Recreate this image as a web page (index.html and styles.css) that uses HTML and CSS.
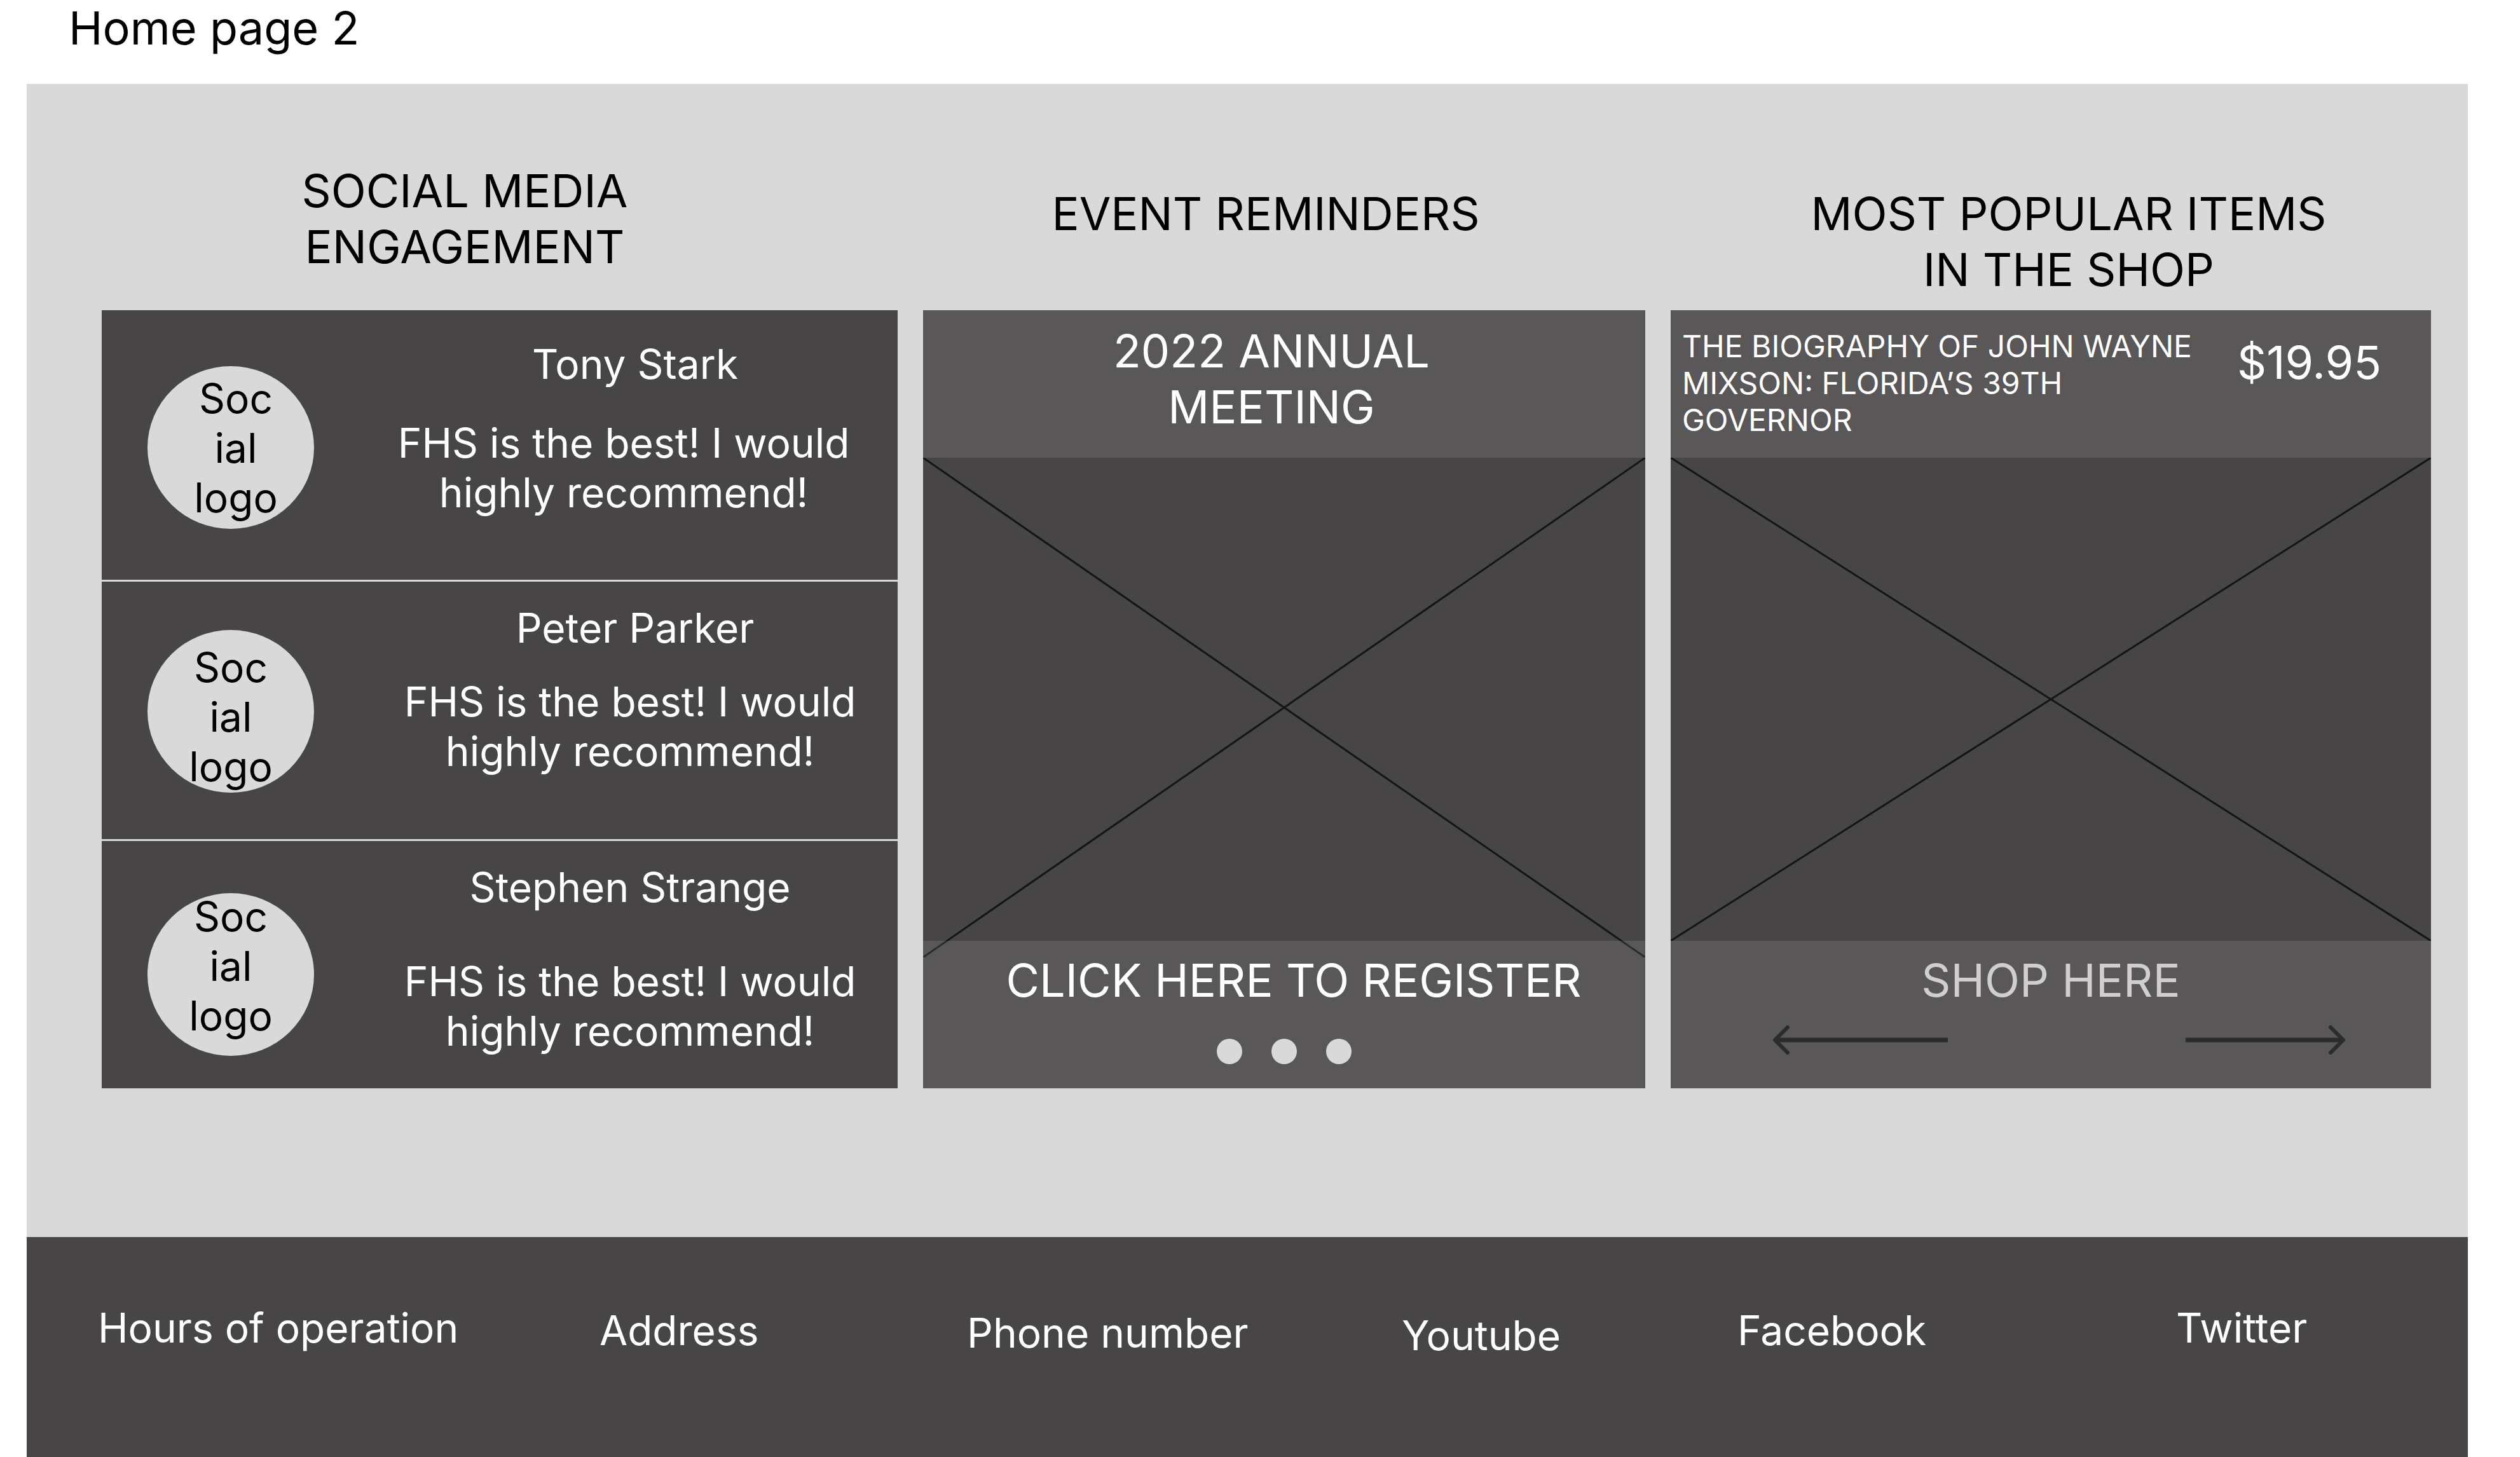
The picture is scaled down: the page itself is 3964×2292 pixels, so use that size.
FILE: index.html
```html
<!DOCTYPE html>
<html lang="en">
<head>
<meta charset="utf-8">
<title>Home page 2</title>
<link rel="stylesheet" href="styles.css">
</head>
<body>
<h1 class="page-title">Home page 2</h1>
<div class="frame">
  <main class="columns">
    <section class="column column-social">
      <h2 class="heading">SOCIAL MEDIA<br>ENGAGEMENT</h2>
      <ul class="card posts">
        <li class="post post-first">
          <div class="avatar"><span class="avatar-label">Soc<br>ial<br>logo</span></div>
          <div class="post-text">
            <h3 class="author">Tony Stark</h3>
            <p class="quote">FHS is the best! I would<br>highly recommend!</p>
          </div>
        </li>
        <li class="post post-second">
          <div class="avatar"><span class="avatar-label">Soc<br>ial<br>logo</span></div>
          <div class="post-text">
            <h3 class="author">Peter Parker</h3>
            <p class="quote">FHS is the best! I would<br>highly recommend!</p>
          </div>
        </li>
        <li class="post post-third">
          <div class="avatar"><span class="avatar-label">Soc<br>ial<br>logo</span></div>
          <div class="post-text">
            <h3 class="author">Stephen Strange</h3>
            <p class="quote">FHS is the best! I would<br>highly recommend!</p>
          </div>
        </li>
      </ul>
    </section>

    <section class="column column-events">
      <h2 class="heading">EVENT REMINDERS</h2>
      <article class="card media">
        <header class="band event-head"><h3 class="event-title">2022 ANNUAL<br>MEETING</h3></header>
        <div class="picture">
          <svg class="cross cross-tall" viewBox="0 0 100 100" preserveAspectRatio="none" aria-hidden="true">
            <path d="M0 0L100 100M100 0L0 100" vector-effect="non-scaling-stroke"/>
          </svg>
        </div>
        <footer class="band band-foot">
          <a class="action action-register" href="#register">CLICK HERE TO REGISTER</a>
          <div class="dots">
            <button class="dot" type="button" aria-label="Event 1"></button>
            <button class="dot" type="button" aria-label="Event 2"></button>
            <button class="dot" type="button" aria-label="Event 3"></button>
          </div>
        </footer>
      </article>
    </section>

    <section class="column column-shop">
      <h2 class="heading">MOST POPULAR ITEMS<br>IN THE SHOP</h2>
      <article class="card media">
        <header class="band item-head">
          <h3 class="item-title">THE BIOGRAPHY OF JOHN WAYNE MIXSON: FLORIDA’S 39TH GOVERNOR</h3>
          <p class="price">$19.95</p>
        </header>
        <div class="picture">
          <svg class="cross" viewBox="0 0 100 100" preserveAspectRatio="none" aria-hidden="true">
            <path d="M0 0L100 100M100 0L0 100" vector-effect="non-scaling-stroke"/>
          </svg>
        </div>
        <footer class="band band-foot">
          <a class="action action-shop" href="#shop">SHOP HERE</a>
          <div class="arrows">
            <button class="arrow" type="button" aria-label="Previous item">
              <svg width="276" height="48" viewBox="0 0 276 48" aria-hidden="true"><path class="shaft" d="M276 24H6"/><path class="head" d="M24 4L4 24L24 44"/></svg>
            </button>
            <button class="arrow" type="button" aria-label="Next item">
              <svg width="252" height="48" viewBox="0 0 252 48" aria-hidden="true"><path class="shaft" d="M0 24H246"/><path class="head" d="M228 4L248 24L228 44"/></svg>
            </button>
          </div>
        </footer>
      </article>
    </section>
  </main>

  <footer class="site-footer">
    <span>Hours of operation</span>
    <span class="drop-1">Address</span>
    <span class="drop-2">Phone number</span>
    <a class="drop-3" href="#youtube">Youtube</a>
    <a class="drop-1" href="#facebook">Facebook</a>
    <a href="#twitter">Twitter</a>
  </footer>
</div>
</body>
</html>
```
FILE: styles.css
```css
* {
  box-sizing: border-box;
}

body {
  display: flex;
  flex-direction: column;
  min-height: 100vh;
  margin: 0;
  background: #fff;
  color: #000;
  font-family: Inter, "Liberation Sans", sans-serif;
  font-size: 64px;
  line-height: 78px;
}

h1, h2, h3, p, ul {
  margin: 0;
  padding: 0;
  font-size: inherit;
  font-weight: 400;
}

a {
  color: inherit;
  text-decoration: none;
}

button {
  padding: 0;
  border: 0;
  background: none;
  cursor: pointer;
}

.page-title {
  padding: 0 108px 44px;
  font-size: 72px;
  line-height: 88px;
}

.frame {
  display: flex;
  flex: 1;
  flex-direction: column;
  margin: 0 82px 0 42px;
  background: #d9d9d9;
}

/* Three columns */
.columns {
  display: grid;
  grid-template-columns: 1252fr 1136fr 1196fr;
  gap: 40px;
  padding: 0 58px 234px 118px;
}

.column {
  display: grid;
  grid-template-rows: 356px 1fr;
}

.heading {
  padding-top: 160px;
  font-size: 72px;
  line-height: 88px;
  text-align: center;
}

.column-social .heading {
  padding-top: 124px;
  padding-right: 110px;
}

.column-events .heading {
  padding-right: 58px;
}

.column-shop .heading {
  padding-left: 56px;
}

.card {
  background: #474546;
  color: #fff;
}

/* Social posts */
.posts {
  display: flex;
  flex-direction: column;
  list-style: none;
}

.post {
  display: flex;
  gap: 86px;
  padding-left: 72px;
  border-bottom: 3px solid #d9d9d9;
}

.post-first {
  height: 427px;
}

.post-second {
  height: 408px;
}

.post-third {
  flex: 1;
  border-bottom: 0;
}

.avatar {
  flex: none;
  width: 262px;
  height: 256px;
  margin-top: 88px;
  border-radius: 50%;
  background: #d9d9d9;
  color: #000;
  text-align: center;
}

.avatar-label {
  display: block;
  padding-top: 12px;
}

.post-first .avatar {
  padding-left: 16px;
}

.post-second .avatar {
  margin-top: 76px;
}

.post-second .avatar-label {
  padding-top: 20px;
}

.post-third .avatar {
  margin-top: 82px;
}

.post-third .avatar-label {
  margin-top: -2px;
  padding-top: 0;
}

.post-text {
  display: flex;
  flex: 1;
  flex-direction: column;
  gap: 38px;
  padding: 34px 10px 0 0;
  text-align: center;
}

.post-first .post-text {
  gap: 46px;
  padding-top: 46px;
}

.post-third .post-text {
  gap: 70px;
}

.post-first .author,
.post-second .author {
  padding-left: 16px;
}

.post-first .quote {
  padding-right: 20px;
}

/* Event and shop cards */
.media {
  position: relative;
  display: grid;
  grid-template-rows: 232px 760px 232px;
}

.band {
  position: relative;
  z-index: 1;
  background: rgba(255, 255, 255, 0.1);
}

.picture {
  position: relative;
}

.cross {
  position: absolute;
  inset: 0;
  width: 100%;
  height: 100%;
  fill: none;
  stroke: #151515;
  stroke-width: 3px;
}

.cross-tall {
  height: calc(100% + 26px);
}

.event-head {
  padding: 20px 40px 0 0;
  font-size: 72px;
  line-height: 88px;
  text-align: center;
}

.item-head {
  display: flex;
  justify-content: space-between;
  padding: 28px 78px 0 18px;
}

.item-title {
  max-width: 820px;
  font-size: 48px;
  line-height: 58px;
}

.price {
  padding-top: 10px;
  font-size: 72px;
  line-height: 88px;
}

.band-foot {
  display: flex;
  flex-direction: column;
  padding-top: 18px;
}

.action {
  font-size: 72px;
  line-height: 88px;
  text-align: center;
}

.action-register {
  padding-left: 30px;
}

.action-shop {
  color: #d0cece;
}

.dots {
  display: flex;
  justify-content: center;
  gap: 46px;
  padding-top: 48px;
}

.dot {
  width: 40px;
  height: 40px;
  border-radius: 50%;
  background: #d9d9d9;
}

.arrows {
  display: flex;
  justify-content: space-between;
  padding: 26px 134px 0 160px;
}

.arrow svg {
  display: block;
  fill: none;
  stroke: #2b2b2b;
}

.shaft {
  stroke-width: 7px;
}

.head {
  stroke-width: 6px;
  stroke-linecap: round;
  stroke-linejoin: round;
}

/* Site footer */
.site-footer {
  display: grid;
  flex: 1;
  grid-template-columns: 789fr 578fr 684fr 528fr 690fr 459fr;
  align-items: start;
  padding: 104px 0 120px 112px;
  background: #474546;
  color: #fff;
}

.drop-1 {
  padding-top: 4px;
}

.drop-2 {
  padding-top: 8px;
}

.drop-3 {
  padding-top: 12px;
}
```
